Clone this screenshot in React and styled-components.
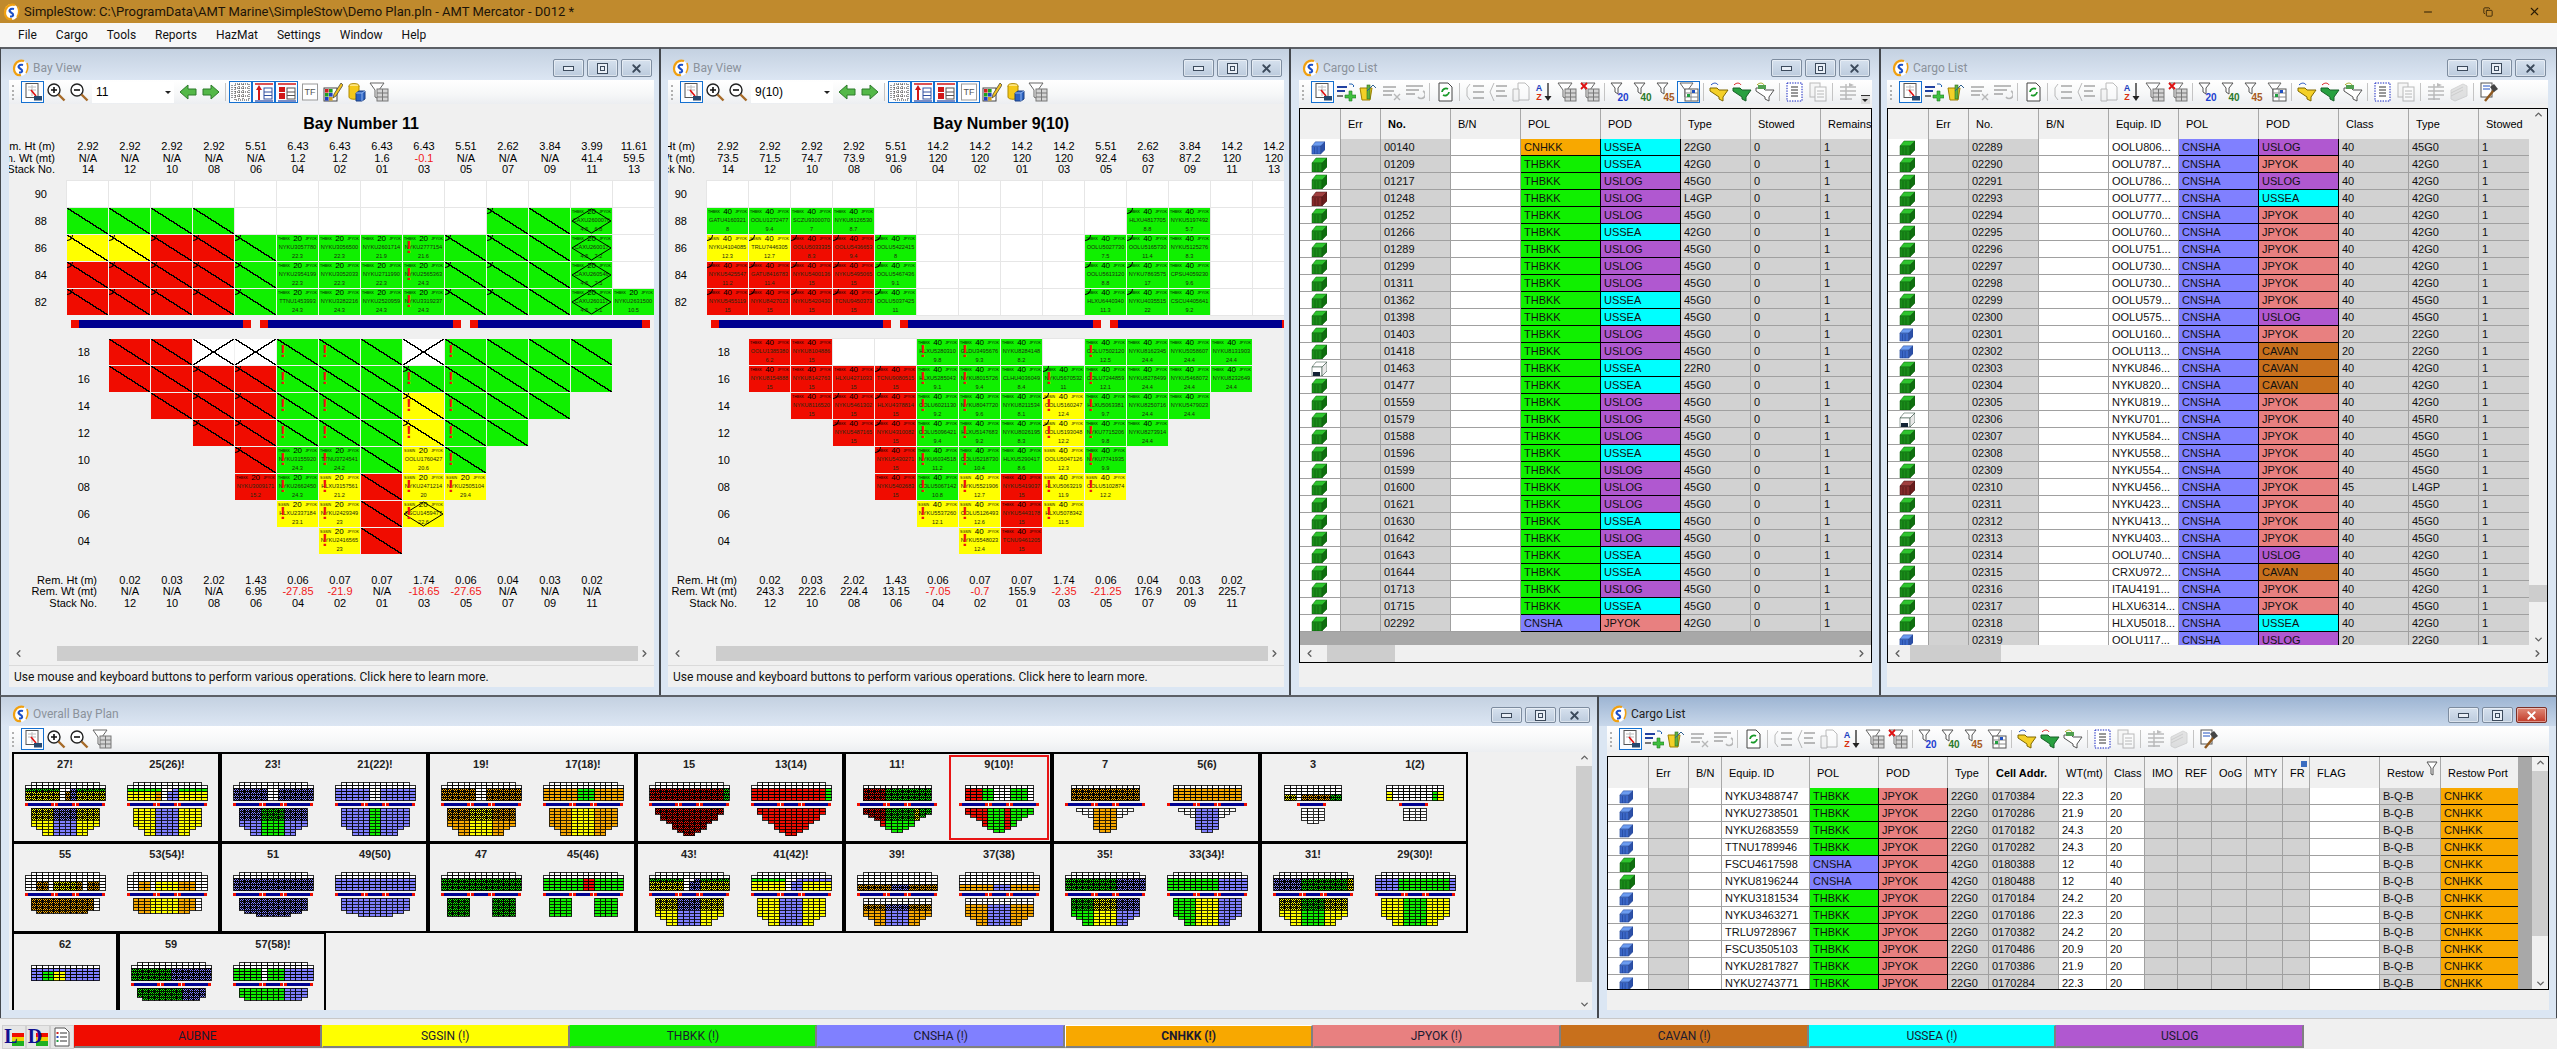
import React from "react";
import styled, { createGlobalStyle } from "styled-components";
import { ChevronDown, ChevronLeft, ChevronRight, ChevronUp, Copy, Minus, X } from "lucide-react";

const PORT = {
  AUBNE: "#f00c00",
  SGSIN: "#ffff00",
  THBKK: "#10f000",
  CNSHA: "#8080ff",
  CNHKK: "#f8a800",
  JPYOK: "#e88080",
  CAVAN: "#c8701c",
  USSEA: "#00ffff",
  USLOG: "#b058d0",
};
const CELL = { G: "#10f000", Y: "#ffff00", R: "#f00c00", W: "#ffffff", B: "#8080ff", O: "#f8a800" };

const GlobalStyle = createGlobalStyle`
  html, body { margin: 0; padding: 0; background: #f0f0f0; overflow: hidden; }
  body { font-family: "Liberation Sans", Arial, sans-serif; font-size: 11px; color: #000; }
  * { box-sizing: border-box; }
`;

/* ---------- shell ---------- */
const Page = styled.div`
  width: 2557px;
  height: 1049px;
  display: flex;
  flex-direction: column;
  overflow: hidden;
`;
const AppTitle = styled.div`
  height: 23px;
  background: #c08a2d;
  display: flex;
  align-items: center;
  padding-left: 3px;
  gap: 4px;
  font: 13px Roboto, sans-serif;
  color: #1c1408;
`;
const AppControls = styled.div`
  margin-left: auto;
  display: flex;
  color: #2a1c06;
`;
const AppControl = styled.div`
  width: 46px;
  height: 23px;
  display: flex;
  align-items: center;
  justify-content: center;
  margin-left: ${(p) => p.$ml || 0}px;
`;
const MenuBar = styled.div`
  height: 24px;
  background: #f7f7f7;
  display: flex;
  align-items: center;
  padding-left: 18px;
  gap: 19px;
  font: 12px Roboto, sans-serif;
  color: #111;
`;
const WindowRow = styled.div`
  display: flex;
  height: ${(p) => p.$h}px;
`;
const Win = styled.section`
  width: ${(p) => p.$w}px;
  height: 100%;
  display: flex;
  flex-direction: column;
  background: #dbe6f3;
  border-top: 2px solid #5c6066;
  border-left: 1px solid #44484e;
  border-right: 1px solid #44484e;
  padding: 0 ${(p) => p.$pr}px 8px ${(p) => p.$pl}px;
`;
const WinTitle = styled.header`
  height: ${(p) => p.$h}px;
  flex: none;
  margin: 0 -${(p) => p.$pr}px 0 -${(p) => p.$pl}px;
  padding: 0 ${(p) => p.$pr + 2}px 3px 11px;
  display: flex;
  align-items: flex-end;
  gap: 4px;
  background: linear-gradient(${(p) => (p.$active ? "#9db5d3, #c8d7ea" : "#c4d1e1, #dce6f3")});
  font: 12px Roboto, sans-serif;
  color: ${(p) => (p.$active ? "#222" : "#8b929b")};
`;
const WinName = styled.span`
  line-height: 18px;
`;
const WinButtons = styled.div`
  margin-left: auto;
  display: flex;
  gap: 3px;
`;
const WinButton = styled.div`
  width: 31px;
  height: ${(p) => p.$h}px;
  border: 1px solid ${(p) => (p.$close ? "#7c3028" : "#7d8c9f")};
  border-radius: 2px;
  background: ${(p) => (p.$close ? "linear-gradient(#e08a78, #c23a28)" : "linear-gradient(#d6e1ee, #bccbdd)")};
  display: flex;
  align-items: center;
  justify-content: center;
  box-shadow: inset 0 0 0 1px rgba(255, 255, 255, 0.45);
`;
const Client = styled.div`
  flex: 1;
  min-height: 0;
  background: #f0f0f0;
  display: flex;
  flex-direction: column;
  overflow: hidden;
`;

/* ---------- toolbar ---------- */
const Tools = styled.div`
  height: ${(p) => p.$h || 24}px;
  flex: none;
  display: flex;
  align-items: center;
  padding-left: 3px;
  background: linear-gradient(#ffffff, #f6f7f8 60%, #eceef1);
`;
const Grip = styled.div`
  width: 3px;
  height: 15px;
  margin-right: 6px;
  border-left: 2px dotted #b0b0b0;
`;
const Slot = styled.div`
  width: 23px;
  height: 22px;
  flex: none;
  display: flex;
  align-items: center;
  justify-content: center;
  border: 1px solid ${(p) => (p.$on ? "#1470d0" : "transparent")};
  background: ${(p) => (p.$on ? "#fafcff" : "transparent")};
  opacity: ${(p) => (p.$dim ? 0.38 : 1)};
`;
const ToolSep = styled.div`
  width: 1px;
  height: 18px;
  margin: 0 3px;
  flex: none;
  background: #c4c4c4;
`;
const Combo = styled.div`
  width: 82px;
  height: 21px;
  margin: 0 2px;
  background: #fff;
  font: 12px "Liberation Sans", sans-serif;
  display: flex;
  align-items: center;
  padding-left: 4px;
  position: relative;
  &::after {
    content: "";
    position: absolute;
    right: 3px;
    top: 9px;
    border: 3px solid transparent;
    border-top: 3px solid #222;
  }
`;
const Overflow = styled.div`
  margin-left: auto;
  margin-right: 2px;
  width: 9px;
  height: 9px;
  align-self: flex-end;
  border-top: 1px solid #333;
  position: relative;
  background: #ddd;
  &::after {
    content: "";
    position: absolute;
    left: 1px;
    top: 3px;
    border: 3px solid transparent;
    border-top: 3px solid #222;
  }
`;

const icons = {
  plan: (
    <>
      <rect x="3" y="1.5" width="12" height="14" fill="#fff" stroke="#555" />
      <path d="M5 5h8M5 8h8M9 3v11" stroke="#bbb" />
      <path d="M8 8l5 6" stroke="#e01010" strokeWidth="1.6" />
      <rect x="11" y="14" width="8" height="4.5" fill="#27486e" />
    </>
  ),
  zoomIn: (
    <>
      <circle cx="8" cy="8" r="6" fill="#fff" stroke="#222" strokeWidth="1.4" />
      <path d="M5 8h6M8 5v6" stroke="#111" strokeWidth="1.6" />
      <path d="M12.5 12.5l6 6" stroke="#a66a28" strokeWidth="2.4" />
    </>
  ),
  zoomOut: (
    <>
      <circle cx="8" cy="8" r="6" fill="#fff" stroke="#222" strokeWidth="1.4" />
      <path d="M5 8h6" stroke="#111" strokeWidth="1.6" />
      <path d="M12.5 12.5l6 6" stroke="#a66a28" strokeWidth="2.4" />
    </>
  ),
  left: <path d="M2 10l8-7v4h8v6h-8v4z" fill="#54b848" stroke="#2d7a2a" />,
  right: <path d="M18 10l-8-7v4H2v6h8v4z" fill="#54b848" stroke="#2d7a2a" />,
  grid: (
    <>
      <rect x="4" y="2" width="14" height="16" fill="#fff" stroke="#333" strokeDasharray="1 1" />
      <path d="M4 6h14M4 10h14M4 14h14M8 2v16M12 2v16" stroke="#333" strokeDasharray="1 1" />
      <path d="M1 3v14" stroke="#333" strokeDasharray="1 1" />
    </>
  ),
  height: (
    <>
      <path d="M1 2h18" stroke="#d01818" strokeWidth="1.5" />
      <path d="M5 3l-3 5h2v10h2V8h2z" fill="#d01818" />
      <rect x="10" y="6" width="8" height="11" fill="#fff" stroke="#3050a0" />
      <path d="M10 10h8M10 13.5h8" stroke="#3050a0" />
      <path d="M1 19h18" stroke="#2040a0" strokeWidth="1.2" />
    </>
  ),
  weight: (
    <>
      <path d="M1 2h18" stroke="#d01818" strokeWidth="1.5" />
      <rect x="2" y="5" width="6" height="5" fill="#d01818" />
      <rect x="2" y="11" width="6" height="6" fill="#d01818" />
      <rect x="10" y="6" width="8" height="11" fill="#fff" stroke="#555" />
      <path d="M10 10h8M10 13.5h8" stroke="#555" />
      <path d="M1 19h18" stroke="#2040a0" strokeWidth="1.2" />
    </>
  ),
  tf: (
    <>
      <rect x="2.5" y="2" width="15" height="16" fill="#fff" stroke="#999" />
      <text x="10" y="13" fontSize="9" textAnchor="middle" fontFamily="Liberation Sans" fill="#555">TF</text>
    </>
  ),
  chart: (
    <>
      <rect x="1" y="6" width="13" height="13" fill="#fff" stroke="#444" />
      <rect x="2" y="7" width="3.6" height="3.6" fill="#d02020" />
      <rect x="6" y="7" width="3.6" height="3.6" fill="#20a020" />
      <rect x="2" y="11" width="3.6" height="3.6" fill="#20a020" />
      <rect x="6" y="11" width="3.6" height="3.6" fill="#2040c0" />
      <rect x="2" y="15" width="3.6" height="3.6" fill="#2040c0" />
      <rect x="6" y="15" width="3.6" height="3.6" fill="#d0a020" />
      <path d="M18 1l-7 11-1 4 3-2 7-11z" fill="#f0c020" stroke="#333" strokeWidth=".7" />
    </>
  ),
  barrels: (
    <>
      <ellipse cx="8" cy="4" rx="5" ry="2.4" fill="#ffe680" stroke="#b08a00" />
      <path d="M3 4v11c0 3 10 3 10 0V4" fill="#f4c818" stroke="#b08a00" />
      <path d="M10 11l3-2h6v8l-3 2h-6z" fill="#2c62c0" stroke="#1c3f80" />
      <path d="M10 11h6v8M16 11l3-2" stroke="#8fb4f0" fill="none" />
    </>
  ),
  funnel: (
    <>
      <path d="M1 1h14l-5 7v9l-4-2V8z" fill="#fff" stroke="#666" />
      <rect x="8" y="7" width="11" height="12" fill="#d4d4d4" stroke="#777" />
      <path d="M8 11h11M8 15h11M13.5 7v12" stroke="#777" />
    </>
  ),
  funnelX: (
    <>
      <path d="M1 1h14l-5 7v9l-4-2V8z" fill="#fff" stroke="#666" />
      <rect x="8" y="7" width="11" height="12" fill="#d4d4d4" stroke="#777" />
      <path d="M8 11h11M8 15h11M13.5 7v12" stroke="#777" />
      <path d="M1 1l6 6M7 1L1 7" stroke="#e01010" strokeWidth="1.8" />
    </>
  ),
  add: (
    <>
      <path d="M1 5h10M1 9h8" stroke="#2040a0" strokeWidth="2" />
      <path d="M13 2a4 3 0 0 1 5 2l-1 1" stroke="#2060b0" fill="none" />
      <path d="M9 13h4V9h3v4h4v3h-4v3h-3v-3H9z" fill="#40c040" stroke="#207a20" strokeWidth=".6" />
      <path d="M1 14h6" stroke="#777" strokeWidth="2" />
    </>
  ),
  edit: (
    <>
      <path d="M1 6h12l-2 12H3z" fill="#f4d028" stroke="#a08000" />
      <rect x="8" y="3" width="3" height="14" fill="#60b040" stroke="#307020" strokeWidth=".6" />
      <path d="M8 9l6-6 3 3" stroke="#306090" fill="none" />
    </>
  ),
  rowsA: (
    <>
      <path d="M1 5h13M1 9h11M1 13h9" stroke="#555" strokeWidth="1.8" />
      <path d="M12 12l6 6M18 12l-6 6" stroke="#555" strokeWidth="1.4" />
    </>
  ),
  rowsB: (
    <>
      <path d="M1 4h17M1 8h13M1 12h9" stroke="#555" strokeWidth="1.8" />
      <path d="M18 9a4 4 0 1 1-5 6" stroke="#555" strokeWidth="1.6" fill="none" />
    </>
  ),
  refresh: (
    <>
      <path d="M4 1h9l4 4v14H4z" fill="#fff" stroke="#444" />
      <path d="M7 10a4 4 0 0 1 6-3M14 10a4 4 0 0 1-6 3" stroke="#1a9a2a" strokeWidth="1.8" fill="none" />
    </>
  ),
  treeA: (
    <>
      <path d="M5 2L2 6v8l3 4" stroke="#555" fill="none" />
      <path d="M8 4h11M8 10h11M8 16h11" stroke="#555" strokeWidth="1.8" />
    </>
  ),
  treeB: (
    <>
      <path d="M6 1l-4 9 4 9" stroke="#555" fill="none" />
      <path d="M8 4h11M8 9h9M8 14h11" stroke="#555" strokeWidth="1.8" />
    </>
  ),
  pages: (
    <>
      <path d="M7 1h7l4 4v13H7z" fill="#fff" stroke="#555" />
      <path d="M2 7h6v12H2z" fill="#eee" stroke="#555" />
    </>
  ),
  sort: (
    <>
      <text x="5" y="8.5" fontSize="9" fontWeight="700" textAnchor="middle" fontFamily="Liberation Sans" fill="#1c3fc0">A</text>
      <text x="5" y="18" fontSize="9" fontWeight="700" textAnchor="middle" fontFamily="Liberation Sans" fill="#d83010">Z</text>
      <path d="M14 1v15" stroke="#222" strokeWidth="1.3" />
      <path d="M10.5 14h7L14 19z" fill="#222" />
    </>
  ),
  layout: (
    <>
      <path d="M1 1h13l-5 7v9l-3-2V8z" fill="#fff" stroke="#666" />
      <rect x="6" y="7" width="13" height="12" fill="#fff" stroke="#555" />
      <path d="M6 11h13M6 15h13M12 7v12" stroke="#888" />
      <rect x="8" y="12" width="3" height="3" fill="#20a040" />
      <rect x="13" y="8" width="3" height="3" fill="#2050c0" />
    </>
  ),
  folderY: (
    <>
      <path d="M2 3c3-3 6-2 7 0" stroke="#2050c0" fill="none" />
      <path d="M1 6h7l2 2h9l-5 7v4l-4-2v-2L1 9z" fill="#f4d028" stroke="#806800" />
    </>
  ),
  folderG: (
    <>
      <path d="M2 3c3-3 6-2 7 0" stroke="#d82020" fill="none" />
      <path d="M1 6h7l2 2h9l-5 7v4l-4-2v-2L1 9z" fill="#28a040" stroke="#186028" />
    </>
  ),
  folderW: (
    <>
      <path d="M2 3c3-3 6-2 7 0" stroke="#a8a820" fill="none" />
      <path d="M1 6h7l2 2h9l-5 7v4l-4-2v-2L1 9z" fill="#fff" stroke="#555" />
      <rect x="3" y="3" width="8" height="4" fill="#50a050" />
    </>
  ),
  docDots: (
    <>
      <rect x="2" y="1" width="15" height="18" fill="#fff" stroke="#1020c0" strokeDasharray="1.4 1.2" />
      <path d="M6 5h7M6 8h7M6 11h7M6 14h7" stroke="#333" />
    </>
  ),
  copy: (
    <>
      <rect x="2" y="1" width="10" height="14" fill="#eee" stroke="#555" />
      <rect x="7" y="5" width="11" height="14" fill="#fff" stroke="#555" />
      <path d="M9 9h7M9 12h7M9 15h7" stroke="#555" />
    </>
  ),
  table: (
    <>
      <path d="M2 5h16M2 9h16M2 13h16M2 17h12M8 2v16" stroke="#555" strokeWidth="1.4" />
      <path d="M11 1l5 2-5 2z" fill="#555" />
    </>
  ),
  layers: (
    <>
      <path d="M2 8l12-6 4 2v10L6 19l-4-2z" fill="#bbb" stroke="#999" />
      <path d="M2 11l12-6M2 14l12-6" stroke="#888" />
    </>
  ),
  hammer: (
    <>
      <rect x="2" y="1" width="11" height="14" fill="#fff" stroke="#555" />
      <path d="M4 4h7M4 7h7" stroke="#2050c0" />
      <path d="M6 19L15 8" stroke="#905a20" strokeWidth="2.4" />
      <path d="M11 5l4-3 4 5-4 3z" fill="#444" />
    </>
  ),
};

const Icon = ({ name, size = 20 }) => (
  <svg width={size} height={size} viewBox="0 0 20 20">
    {icons[name]}
  </svg>
);

const FilterSize = ({ size }) => {
  const tone = { 20: "#1c40d0", 40: "#2a7a2a", 45: "#a85a20" }[size];
  return (
    <svg width="20" height="20" viewBox="0 0 20 20">
      <path d="M1 1h11l-4 5v6l-3-2V6z" fill="#fff" stroke="#555" />
      <text x="13" y="19" fontSize="10" fontWeight="700" textAnchor="middle" fontFamily="Liberation Sans" fill={tone}>
        {size}
      </text>
    </svg>
  );
};

const Toolbar = ({ items, h, overflow }) => (
  <Tools $h={h}>
    <Grip />
    {items.map((item, i) => {
      if (item === "|") return <ToolSep key={i} />;
      if (typeof item !== "string") return <React.Fragment key={i}>{item}</React.Fragment>;
      const [name, flag] = item.split(":");
      return (
        <Slot key={i} $on={flag === "on"} $dim={flag === "dim"}>
          {/^\d+$/.test(name) ? <FilterSize size={name} /> : <Icon name={name} />}
        </Slot>
      );
    })}
    {overflow && <Overflow />}
  </Tools>
);

const bayTools = (value) => [
  "plan:on",
  "zoomIn",
  "zoomOut",
  <Combo>{value}</Combo>,
  "left",
  "right",
  "|",
  "grid:on",
  "height:on",
  "weight:on",
  value === "11" ? "tf" : "tf:on",
  "chart",
  "barrels",
  "funnel",
];
const cargoTools = [
  "plan:on", "add", "edit", "rowsA:dim", "rowsB:dim", "|", "refresh", "|", "treeA:dim", "treeB:dim", "pages:dim",
  "sort", "funnel", "funnelX", "|", "20", "40", "45",
];
const cargoToolsEnd = ["|", "folderY", "folderG", "folderW", "|", "docDots", "copy:dim", "|", "table:dim"];

const Logo = () => (
  <svg width="17" height="18" viewBox="0 0 17 18">
    <ellipse cx="8.5" cy="9" rx="7" ry="8" fill="#fff" />
    <path d="M12 2C6 0 2 5 2 10c0 4 3 7 7 6" fill="none" stroke="#f0a010" strokeWidth="2.2" />
    <path d="M11 6C7 5 5 8 8 9.5s3 4-1 4" fill="none" stroke="#1c50c8" strokeWidth="2.2" />
    <path d="M15 4c1 3 1 7-1 10" fill="none" stroke="#f0a010" strokeWidth="1.6" />
  </svg>
);

const WindowShell = ({ title, w, pl, pr, titleH = 31, btnH = 18, active, children }) => (
  <Win $w={w} $pl={pl} $pr={pr}>
    <WinTitle $h={titleH} $pl={pl} $pr={pr} $active={active}>
      <Logo />
      <WinName>{title}</WinName>
      <WinButtons>
        <WinButton $h={btnH}>
          <svg width="11" height="7"><rect x=".5" y="1.5" width="10" height="4" fill="#e8eef6" stroke="#3c4a5c" /></svg>
        </WinButton>
        <WinButton $h={btnH}>
          <svg width="11" height="11"><rect x=".5" y=".5" width="10" height="10" fill="#e8eef6" stroke="#3c4a5c" /><rect x="3.5" y="3.5" width="4" height="4" fill="none" stroke="#3c4a5c" /></svg>
        </WinButton>
        <WinButton $h={btnH} $close={active}>
          <X size={13} strokeWidth={3.4} color={active ? "#fff" : "#3c4a5c"} />
        </WinButton>
      </WinButtons>
    </WinTitle>
    <Client>{children}</Client>
  </Win>
);

/* ---------- bay view ---------- */
const PlanTitle = styled.div`
  height: 37px;
  line-height: 40px;
  flex: none;
  width: ${(p) => p.$label + 588}px;
  padding-left: ${(p) => p.$label}px;
  text-align: center;
  font-size: 16px;
  font-weight: 700;
`;
const MetaGrid = styled.div`
  flex: none;
  display: grid;
  grid-template-columns: ${(p) => p.$label}px repeat(14, 42px);
  grid-auto-rows: 11.5px;
  line-height: 11.5px;
  margin-top: ${(p) => p.$mt || 0}px;
  text-align: center;
`;
const MetaLabel = styled.div`
  display: flex;
  justify-content: flex-end;
  white-space: nowrap;
  padding-right: 12px;
`;
const MetaValue = styled.div`
  color: ${(p) => (p.$neg ? "#f01818" : "#000")};
`;
const PlanGrid = styled.div`
  flex: none;
  display: grid;
  grid-template-columns: ${(p) => p.$label - 1}px repeat(14, 41px);
  grid-auto-rows: 26px;
  gap: 1px;
  margin-top: ${(p) => p.$mt}px;
`;
const RowLabel = styled.div`
  display: flex;
  align-items: center;
  justify-content: flex-end;
  padding-right: ${(p) => p.$pr}px;
  font-size: 11px;
`;
const BayCell = styled.div`
  position: relative;
  overflow: hidden;
  background-color: ${(p) => p.$color};
  display: flex;
  flex-direction: column;
  outline: ${(p) => (p.$empty ? "1px solid #e6e6e6" : "none")};
  background-image: ${(p) => {
    const a = "linear-gradient(to top right, transparent calc(50% - .7px), #000 calc(50% - .7px), #000 calc(50% + .7px), transparent calc(50% + .7px))";
    const b = "linear-gradient(to top left, transparent calc(50% - .7px), #000 calc(50% - .7px), #000 calc(50% + .7px), transparent calc(50% + .7px))";
    if (p.$cross) return `${a}, ${b}`;
    return p.$diag ? a : "none";
  }};
`;
const Arc = styled.i`
  position: absolute;
  left: 0;
  top: 0;
  width: 6px;
  height: 6px;
  border-right: 1px solid #000;
  border-bottom: 1px solid #000;
  border-bottom-right-radius: 6px;
`;
const Alert = styled.b`
  position: absolute;
  left: 3px;
  top: 3px;
  font-size: 17px;
  line-height: 19px;
  color: #f01010;
`;
const CellTop = styled.div`
  height: 8px;
  display: flex;
  align-items: center;
  justify-content: space-between;
  padding: 0 1px;
  font-size: 3.6px;
  line-height: 8px;
`;
const CellSize = styled.span`
  font-size: 8px;
`;
const CellLine = styled.div`
  height: 9px;
  line-height: 9px;
  text-align: center;
  font-size: 5.6px;
  white-space: pre;
  color: #1c2a10;
`;
const Diamond = styled.svg`
  position: absolute;
  inset: 0;
  width: 100%;
  height: 100%;
`;
const Hatches = styled.div`
  flex: none;
  display: flex;
  gap: 9px;
  margin: 5px 0 0 ${(p) => p.$label + 4}px;
`;
const HatchBar = styled.div`
  height: 8px;
  flex: none;
  width: ${(p) => p.$w}px;
  background: #000090;
  border-left: 8px solid #f00c00;
  border-right: 8px solid #f00c00;
`;
const HScroll = styled.div`
  height: ${(p) => p.$h || 15}px;
  flex: none;
  display: flex;
  align-items: center;
  justify-content: space-between;
  background: #f0f0f0;
  margin-top: ${(p) => (p.$auto ? "auto" : "0")};
  padding: 0 4px;
`;
const Thumb = styled.div`
  height: 100%;
  background: #cdcdcd;
  width: ${(p) => p.$w}px;
  margin-left: ${(p) => p.$ml}px;
  margin-right: auto;
`;
const StatusBar = styled.div`
  height: 22px;
  flex: none;
  margin-top: 4px;
  border-top: 1px solid #dadada;
  padding: 0 5px;
  display: flex;
  align-items: center;
  font: 12px Roboto, sans-serif;
  color: #111;
`;

const parseCell = (token) => {
  const [code, id, wt] = token.split(" ");
  const flags = code.slice(1);
  return {
    kind: code[0],
    diag: flags.includes("x"),
    arc: flags.includes("a"),
    alert: flags.includes("!"),
    diamond: flags.includes("d"),
    cross: flags.includes("X"),
    id,
    wt: wt && wt.replace("_", "    "),
  };
};

const Cell = ({ token, size }) => {
  const c = parseCell(token);
  if (c.kind === "-") return <div />;
  if (c.kind === ".") return <BayCell $color="#fff" $empty />;
  return (
    <BayCell $color={CELL[c.kind]} $diag={c.diag} $cross={c.cross}>
      {c.id && (
        <>
          <CellTop>
            <span>{c.kind === "Y" ? "SGSIN" : "THBKK"}</span>
            <CellSize>{size}</CellSize>
            <span>JPYOK</span>
          </CellTop>
          <CellLine>{c.id}</CellLine>
          <CellLine>{c.wt}</CellLine>
        </>
      )}
      {c.diamond && (
        <Diamond viewBox="0 0 41 26" preserveAspectRatio="none">
          <polygon points="20.5,1 40,13 20.5,25 1,13" fill="none" stroke="#000" strokeWidth="1" />
        </Diamond>
      )}
      {c.arc && <Arc />}
      {c.alert && <Alert>!</Alert>}
    </BayCell>
  );
};

const BayPlan = ({ plan }) => {
  const { label, size } = plan;
  return (
    <Client>
      <Toolbar items={bayTools(plan.value)} />
      <PlanTitle $label={label}>Bay Number {plan.value}</PlanTitle>
      <MetaGrid $label={label}>
        {[["Rem. Ht (m)", plan.ht], ["Rem. Wt (mt)", plan.wt], ["Stack No.", plan.stack]].map(([name, values]) => (
          <React.Fragment key={name}>
            <MetaLabel>{name}</MetaLabel>
            {values.split(" ").map((v, i) => (
              <MetaValue key={i} $neg={v.startsWith("-")}>{v}</MetaValue>
            ))}
          </React.Fragment>
        ))}
      </MetaGrid>
      <PlanGrid $label={label} $mt={5}>
        {plan.deck.map((row) => (
          <React.Fragment key={row[0]}>
            <RowLabel $pr={19}>{row[0]}</RowLabel>
            {row[1].split(",").map((t, i) => <Cell key={i} token={t} size={size} />)}
          </React.Fragment>
        ))}
      </PlanGrid>
      <Hatches $label={label}>
        <HatchBar $w={180} />
        <HatchBar $w={201} />
        <HatchBar $w={180} />
      </Hatches>
      <PlanGrid $label={label} $mt={11}>
        {plan.hold.map((row) => (
          <React.Fragment key={row[0]}>
            <div />
            <RowLabel $pr={18}>{row[0]}</RowLabel>
            {row[1].split(",").map((t, i) => <Cell key={i} token={t} size={size} />)}
          </React.Fragment>
        ))}
      </PlanGrid>
      <MetaGrid $label={label} $mt={21}>
        {[["Rem. Ht (m)", plan.remHt], ["Rem. Wt (mt)", plan.remWt], ["Stack No.", "12 10 08 06 04 02 01 03 05 07 09 11"]].map(([name, values]) => (
          <React.Fragment key={name}>
            <div />
            <MetaLabel>{name}</MetaLabel>
            {values.split(" ").map((v, i) => (
              <MetaValue key={i} $neg={v.startsWith("-")}>{v}</MetaValue>
            ))}
            <div />
          </React.Fragment>
        ))}
      </MetaGrid>
      <HScroll $auto>
        <ChevronLeft size={11} strokeWidth={3} color="#606060" />
        <Thumb $w={plan.thumb} $ml={33} />
        <ChevronRight size={11} strokeWidth={3} color="#606060" />
      </HScroll>
      <StatusBar>Use mouse and keyboard buttons to perform various operations. Click here to learn more.</StatusBar>
    </Client>
  );
};

const bay11 = {
  value: "11",
  size: 20,
  label: 58,
  thumb: 581,
  ht: "2.92 2.92 2.92 2.92 5.51 6.43 6.43 6.43 6.43 5.51 2.62 3.84 3.99 11.61",
  wt: "N/A N/A N/A N/A N/A 1.2 1.2 1.6 -0.1 N/A N/A N/A 41.4 59.5",
  stack: "14 12 10 08 06 04 02 01 03 05 07 09 11 13",
  deck: [
    ["90", ".,.,.,.,.,.,.,.,.,.,.,.,.,."],
    ["88", "Gx,Gx,Gx,Gx,.,.,.,.,.,.,Gxa,Gx,Gd CAXU2600076 4.5_6.8,."],
    ["86", "Yxa,Yxa,Rxa,Rxa,Gxa,G NYKU3057780 22.3,G NYKU3056500 22.3,G NYKU2601714 21.9,G! NYKU2777154 21.6,Gxa,Gxa,Gx,Gd CAXU260017 4.5_7.2,."],
    ["84", "Rxa,Rxa,Rxa,Rxa,Gxa,G NYKU2954199 22.3,G NYKU3052033 22.3,G NYKU2711990 22.3,G! NYKU2565363 24.3,Gxa,Gxa,Gx,Gd CAXU260546 4.5_7.5,."],
    ["82", "Rxa,Rxa,Rxa,Rxa,Gxa,G TTNU1453993 24.3,G NYKU3282216 24.3,G NYKU2520959 24.3,G! NYKU3319237 24.3,Gxa,Gxa,Gx,Gd CAXU260117 4.5_7.1,G NYKU2631500 10.5"],
  ],
  hold: [
    ["18", "Rx,Rx,WX,WX,Gx!,Gx!,Gx,WX,Gx!,Gx,Gx,Gx,-"],
    ["16", "Rx,Rx,Rxa,Rxa,Gx!,Gx!,Gx,Gxa!,Gx!,Gx,Gx,Gx,-"],
    ["14", "-,Rx,Rxa,Rxa,Gx!,Gx!,Gx,Yxa!,Gx!,Gx,Gx,-,-"],
    ["12", "-,-,Rxa,Rxa,Gx!,Gx!,Gx,Yxa!,Gx!,Gx,-,-,-"],
    ["10", "-,-,-,Rxa,G! NYKU3155920 24.3,G! TTNU3724541 24.2,Gx,Y OOLU1760427 20.6,Gx!,-,-,-,-"],
    ["08", "-,-,-,R NYKU3009171 15.2,G! NYKU2662450 24.3,Y! HLXU3157561 21.2,Rx,Y! NYKU2471214 20,Y! NYKU2505104 29.4,-,-,-,-"],
    ["06", "-,-,-,-,Y! HLXU2337184 23.1,Y! NYKU2429349 23,Rx,Yd! FSCU1459477 22.6,-,-,-,-,-"],
    ["04", "-,-,-,-,-,Y! NYKU2416565 23,Rx,-,-,-,-,-,-"],
  ],
  remHt: "0.02 0.03 2.02 1.43 0.06 0.07 0.07 1.74 0.06 0.04 0.03 0.02",
  remWt: "N/A N/A N/A 6.95 -27.85 -21.9 N/A -18.65 -27.65 N/A N/A N/A",
};
const bay9 = {
  value: "9(10)",
  size: 40,
  label: 39,
  thumb: 552,
  ht: "2.92 2.92 2.92 2.92 5.51 14.2 14.2 14.2 14.2 5.51 2.62 3.84 14.2 14.2",
  wt: "73.5 71.5 74.7 73.9 91.9 120 120 120 120 92.4 63 87.2 120 120",
  stack: "14 12 10 08 06 04 02 01 03 05 07 09 11 13",
  deck: [
    ["90", ".,.,.,.,.,.,.,.,.,.,.,.,.,."],
    ["88", "G GATU4160321 8,G OOLU1272477 9.4,G SCZU9300070 7,G NYKU8126530 8.7,.,.,.,.,.,.,Ga HLXU4817705 8.8,G NYKU5197492 5.7,.,."],
    ["86", "Ya NYKU4104085 12.3,Ya TRLU7446305 12.7,Ra OOLU5033335 8.3,Ra OOLU5436653 9.4,Ga OOLU5422415 8,.,.,.,.,Ga OOLU5027730 7.5,Ga OOLU5165730 11.4,G NYKU5125276 8.3,.,."],
    ["84", "Ra NYKU5425547 11.2,Ra GATU8416783 11.4,Ra NYKU5400136 15,Ra NYKU5495065 15,Ga OOLU5467436 9.1,.,.,.,.,Ga OOLU5613120 8.8,Ga NYKU7863575 17,G CPSU4059230 9.6,.,."],
    ["82", "Ra NYKU5455119 15,Ra NYKU8427023 15,Ra NYKU5420430 15,Ra TCNU9450373 15,Ga OOLU5037425 11,.,.,.,.,Ga HLXU6440340 11.3,Ga NYKU4035515 22,G CSCU4405641 9.2,.,."],
  ],
  hold: [
    ["18", "R OOLU1385380 6.2,R NYKU8104886 15,.,.,G! HLXU5280310 9.8,G! GLDU3495676 9.3,G NYKU8284148 8.2,.,G! OOLU7502120 12.5,G NYKU8162345 24.4,G NYKU5058607 24.4,G NYKU8131903 24.4,-"],
    ["16", "R NYKU8154888 15,R NYKU8142763 15,R HLXU4271033 15,Ra TCNU9080515 15,G! HLXU5285043 9.1,G! NYKU8015726 9.4,G CLHU4036049 8.4,Ga! NYKU5670532 11,G! OOLU7244859 12.1,G NYKU8278499 24.4,G NYKU5468072 24.4,G NYKU8232649 24.4,-"],
    ["14", "-,R NYKU8116520 15,Ra NYKU5461302 15,Ra HLXU4378814 15,G! OOLU6021130 9.2,G! NYKU8047720 9.6,G NYKU8211534 8.1,Ya! OOLU5160247 12.4,G! HLXU5063381 9.7,G NYKU8250716 24.4,G NYKU5479023 24.4,-,-"],
    ["12", "-,-,Ra NYKU5487165 15,Ra NYKU4310082 15,G! OOLU5096421 9.4,G! HLXU5147683 9.2,G NYKU8026195 8.3,Ya! OOLU5193048 12.2,G! NYKU7715206 9.8,G NYKU8273914 24.4,-,-,-"],
    ["10", "-,-,-,Ra NYKU5430271 15,G! NYKU6034518 11.2,G! OOLU5218730 10.4,G HLXU5290417 8.6,Y OOLU5047126 12.3,G! NYKU7741935 9.9,-,-,-,-"],
    ["08", "-,-,-,R NYKU5402683 15,G! OOLU5067142 10.8,Y! NYKU5521906 12.7,R NYKU5419037 15,Y! HLXU5063219 11.9,Y! OOLU5102874 12.2,-,-,-,-"],
    ["06", "-,-,-,-,Y! NYKU5537260 12.1,Y! OOLU5126493 12.6,R NYKU5443178 15,Y! HLXU5078342 11.5,-,-,-,-,-"],
    ["04", "-,-,-,-,-,Y! NYKU5548023 12.4,R TCNU9461205 15,-,-,-,-,-,-"],
  ],
  remHt: "0.02 0.03 2.02 1.43 0.06 0.07 0.07 1.74 0.06 0.04 0.03 0.02",
  remWt: "243.3 222.6 224.4 13.15 -7.05 -0.7 155.9 -2.35 -21.25 176.9 201.3 225.7",
};

/* ---------- cargo tables ---------- */
const TableFrame = styled.div`
  flex: none;
  height: ${(p) => p.$h}px;
  margin-top: 4px;
  border: 1px solid #000;
  background: #a8a8a8;
  display: flex;
  flex-direction: column;
  overflow: hidden;
`;
const TableMain = styled.div`
  flex: 1;
  min-height: 0;
  display: flex;
  overflow: hidden;
`;
const TableBody = styled.div`
  flex: 1;
  min-width: 0;
  overflow: hidden;
`;
const Row = styled.div`
  display: grid;
  grid-template-columns: ${(p) => p.$cols};
  height: ${(p) => p.$h || 17}px;
`;
const HeadCell = styled.div`
  background: #f0f0f0;
  border-right: 1px solid #a8a8a8;
  display: flex;
  align-items: center;
  padding-left: 7px;
  font-weight: ${(p) => (p.$bold ? 700 : 400)};
  white-space: nowrap;
  overflow: hidden;
  position: relative;
`;
const DataCell = styled.div`
  background: ${(p) => p.$bg};
  border-right: 1px solid ${(p) => (p.$port ? "#000" : "#a0a0a0")};
  border-bottom: 1px solid ${(p) => (p.$port ? "#000" : "#a0a0a0")};
  display: flex;
  align-items: center;
  padding-left: 3px;
  white-space: nowrap;
  overflow: hidden;
  color: #111;
`;
const IconCell = styled(DataCell)`
  padding-left: 11px;
`;
const Band = styled.div`
  width: ${(p) => p.$w}px;
  flex: none;
  background: #a8a8a8;
`;
const VScroll = styled.div`
  width: ${(p) => p.$w}px;
  flex: none;
  background: #f0f0f0;
  display: flex;
  flex-direction: column;
  align-items: center;
  justify-content: space-between;
`;
const VThumb = styled.div`
  width: 100%;
  height: ${(p) => p.$h}px;
  margin-top: ${(p) => p.$mt}px;
  margin-bottom: auto;
  background: #cdcdcd;
`;
const HeadMark = styled.span`
  position: absolute;
  right: 2px;
  top: 4px;
  display: flex;
`;

const Cube = ({ kind }) => {
  const sets = {
    g: { w: 16, top: "#2ec42e", front: "#1a8c1a", side: "#0f6e0f", line: "#0c5c0c" },
    b: { w: 14, top: "#6c9cf0", front: "#3c68c8", side: "#2c50a8", line: "#183a88" },
    r: { w: 16, top: "#a04040", front: "#862c2c", side: "#6a1c1c", line: "#401010" },
    w: { w: 16, top: "#fff", front: "#fff", side: "#e8e8e8", line: "#1c3c2c" },
  };
  const s = sets[kind];
  return (
    <svg width={s.w} height="15" viewBox="0 0 16 15">
      <polygon points="1,6 5,1 16,1 11,6" fill={s.top} stroke={s.line} strokeWidth=".5" />
      <polygon points="1,6 11,6 11,15 1,15" fill={s.front} stroke={s.line} strokeWidth=".5" />
      <polygon points="11,6 16,1 16,10 11,15" fill={s.side} stroke={s.line} strokeWidth=".5" />
      {kind === "w" ? (
        <rect x="2" y="11" width="7" height="4" fill="#123" />
      ) : (
        <path d="M4 7v8M7 7v8" stroke={s.line} strokeWidth=".6" />
      )}
    </svg>
  );
};

const CargoTable = ({ h, cols, rows, headBold, marks = {}, bandW, scroll, hscroll }) => {
  const template = cols.map((c) => `${c.w}px`).join(" ");
  return (
    <TableFrame $h={h}>
      <TableMain>
        <TableBody>
          <Row $cols={template} $h={cols.headH || 30}>
            {cols.map((c, i) => (
              <HeadCell key={i} $bold={c.h === headBold}>
                {c.h}
                {marks[c.h] && <HeadMark>{marks[c.h]}</HeadMark>}
              </HeadCell>
            ))}
          </Row>
          {rows.map((row, r) => (
            <Row key={r} $cols={template}>
              {cols.map((c, i) => {
                const v = c.k === undefined ? "" : row[c.k];
                if (c.cube) {
                  return (
                    <IconCell key={i} $bg="#fff">
                      <Cube kind={v} />
                    </IconCell>
                  );
                }
                if (c.port) return <DataCell key={i} $bg={PORT[v]} $port>{v}</DataCell>;
                return (
                  <DataCell key={i} $bg={c.white ? "#fff" : "#d2d2d2"}>
                    {c.fixed || v}
                  </DataCell>
                );
              })}
            </Row>
          ))}
        </TableBody>
        {bandW && <Band $w={bandW} />}
        {scroll && (
          <VScroll $w={scroll.w}>
            <ChevronUp size={11} strokeWidth={3} color="#606060" />
            <VThumb $h={scroll.h} $mt={scroll.mt} />
            <ChevronDown size={11} strokeWidth={3} color="#606060" />
          </VScroll>
        )}
      </TableMain>
      {hscroll && (
        <HScroll $h={17}>
          <ChevronLeft size={11} strokeWidth={3} color="#606060" />
          <Thumb $w={hscroll.w} $ml={hscroll.ml} />
          <ChevronRight size={11} strokeWidth={3} color="#606060" />
        </HScroll>
      )}
    </TableFrame>
  );
};

const parseRows = (text) => text.trim().split(/\s*\|\s*/).map((r) => r.split(" "));

const rowsA = parseRows(`00140 b CNHKK USSEA 22G0|01209 g THBKK USSEA 42G0|01217 g THBKK USLOG 45G0|01248 r THBKK USLOG L4GP|01252 g THBKK USLOG 45G0|01266 g THBKK USSEA 42G0|01289 g THBKK USLOG 45G0|01299 g THBKK USLOG 45G0|01311 g THBKK USLOG 45G0|01362 g THBKK USSEA 45G0|01398 g THBKK USSEA 45G0|01403 g THBKK USLOG 45G0|01418 g THBKK USLOG 45G0|01463 w THBKK USSEA 22R0|01477 g THBKK USSEA 45G0|01559 g THBKK USLOG 45G0|01579 g THBKK USLOG 45G0|01588 g THBKK USLOG 45G0|01596 g THBKK USSEA 45G0|01599 g THBKK USLOG 45G0|01600 g THBKK USLOG 45G0|01621 g THBKK USLOG 45G0|01630 g THBKK USSEA 45G0|01642 g THBKK USLOG 45G0|01643 g THBKK USSEA 45G0|01644 g THBKK USSEA 45G0|01713 g THBKK USLOG 45G0|01715 g THBKK USSEA 45G0|02292 g CNSHA JPYOK 42G0`);
const colsA = [
  { h: "", w: 41, k: 1, cube: true },
  { h: "Err", w: 40 },
  { h: "No.", w: 70, k: 0 },
  { h: "B/N", w: 70, white: true },
  { h: "POL", w: 80, k: 2, port: true },
  { h: "POD", w: 80, k: 3, port: true },
  { h: "Type", w: 70, k: 4 },
  { h: "Stowed", w: 70, fixed: "0" },
  { h: "Remains", w: 60, fixed: "1" },
];

const rowsB = parseRows(`02289 g OOLU806... USLOG 40 45G0|02290 g OOLU787... JPYOK 40 42G0|02291 g OOLU786... USLOG 40 42G0|02293 g OOLU777... USSEA 40 42G0|02294 g OOLU770... JPYOK 40 42G0|02295 g OOLU760... JPYOK 40 42G0|02296 g OOLU751... JPYOK 40 42G0|02297 g OOLU730... JPYOK 40 42G0|02298 g OOLU730... JPYOK 40 42G0|02299 g OOLU579... JPYOK 40 45G0|02300 g OOLU575... USLOG 40 45G0|02301 b OOLU160... JPYOK 20 22G0|02302 b OOLU113... CAVAN 20 22G0|02303 g NYKU846... CAVAN 40 42G0|02304 g NYKU820... CAVAN 40 42G0|02305 g NYKU819... JPYOK 40 42G0|02306 w NYKU701... JPYOK 40 45R0|02307 g NYKU584... JPYOK 40 45G0|02308 g NYKU558... JPYOK 40 45G0|02309 g NYKU554... JPYOK 40 45G0|02310 r NYKU456... JPYOK 45 L4GP|02311 g NYKU423... JPYOK 40 45G0|02312 g NYKU413... JPYOK 40 45G0|02313 g NYKU403... JPYOK 40 45G0|02314 g OOLU740... USLOG 40 42G0|02315 g CRXU972... CAVAN 40 45G0|02316 g ITAU4191... JPYOK 40 42G0|02317 g HLXU6314... JPYOK 40 45G0|02318 g HLXU5018... USSEA 40 42G0|02319 b OOLU117... USLOG 20 22G0`).map((r) => [r[0], r[1], r[2], "CNSHA", r[3], r[4], r[5]]);
const colsB = [
  { h: "", w: 41, k: 1, cube: true },
  { h: "Err", w: 40 },
  { h: "No.", w: 70, k: 0 },
  { h: "B/N", w: 70, white: true },
  { h: "Equip. ID", w: 70, k: 2, white: true },
  { h: "POL", w: 80, k: 3, port: true },
  { h: "POD", w: 80, k: 4, port: true },
  { h: "Class", w: 70, k: 5 },
  { h: "Type", w: 70, k: 6 },
  { h: "Stowed", w: 52, fixed: "1" },
];

const rowsC = parseRows(`b NYKU3488747 THBKK 22G0 0170384 22.3 20|b NYKU2738501 THBKK 22G0 0170286 21.9 20|b NYKU2683559 THBKK 22G0 0170182 24.3 20|b TTNU1789946 THBKK 22G0 0170282 24.3 20|g FSCU4617598 CNSHA 42G0 0180388 12 40|g NYKU8196244 CNSHA 42G0 0180488 12 40|b NYKU3181534 THBKK 22G0 0170184 24.2 20|b NYKU3463271 THBKK 22G0 0170186 22.3 20|b TRLU9728967 THBKK 22G0 0170382 24.2 20|b FSCU3505103 THBKK 22G0 0170486 20.9 20|b NYKU2817827 THBKK 22G0 0170386 21.9 20|b NYKU2743771 THBKK 22G0 0170284 22.3 20`);
const colsC = [
  { h: "", w: 41, k: 0, cube: true },
  { h: "Err", w: 40 },
  { h: "B/N", w: 33, white: true },
  { h: "Equip. ID", w: 88, k: 1, white: true },
  { h: "POL", w: 69, k: 2, port: true },
  { h: "POD", w: 69, k: "pod", port: true },
  { h: "Type", w: 41, k: 3 },
  { h: "Cell Addr.", w: 70, k: 4 },
  { h: "WT(mt)", w: 48, k: 5, white: true },
  { h: "Class", w: 38, k: 6, white: true },
  { h: "IMO", w: 33 },
  { h: "REF", w: 34 },
  { h: "OoG", w: 35 },
  { h: "MTY", w: 36 },
  { h: "FR", w: 27 },
  { h: "FLAG", w: 70, white: true },
  { h: "Restow", w: 61, k: "area" },
  { h: "Restow Port", w: 80, k: "rp", port: true },
];
colsC.headH = 31;
rowsC.forEach((r) => {
  r.pod = "JPYOK";
  r.area = "B-Q-B";
  r.rp = "CNHKK";
});

/* ---------- overall bay plan ---------- */
const PlanBody = styled.div`
  flex: 1;
  min-height: 0;
  display: flex;
`;
const CardArea = styled.div`
  flex: 1;
  min-width: 0;
  overflow: hidden;
  padding: 1px 0 0 4px;
  display: flex;
  flex-direction: column;
  gap: 1px;
`;
const CardRow = styled.div`
  display: flex;
  flex: none;
  gap: 2px;
`;
const Card = styled.div`
  height: 89px;
  flex: none;
  display: flex;
  border: 1px solid #000;
  outline: 0.4px solid #000;
`;
const Half = styled.div`
  width: 102px;
  display: flex;
  flex-direction: column;
  align-items: center;
  outline: ${(p) => (p.$selected ? "2px solid #e81414" : "none")};
  outline-offset: -3px;
`;
const HalfName = styled.div`
  height: 21px;
  line-height: 21px;
  font-size: 11px;
  font-weight: 700;
  color: #222;
`;
const MiniSvg = styled.svg`
  display: block;
  margin-top: 7px;
`;

const CW = 5.68;
const CH = 3.06;
const UPF = [[1, 12], [0, 13], [0, 13], [0, 13], [0, 13], [0, 13]];
const UPN = [null, [1, 12], [1, 12], [1, 12], [1, 12], [1, 12]];
const UPS = [null, [2, 11], [2, 11], [2, 11], [2, 11], [2, 11]];
const full = (n) => Array.from({ length: n }, () => [1, 12]);
const U = [...full(6), [2, 11], [3, 10], [3, 10]];
const V8 = [[1, 12], [1, 12], [2, 11], [3, 10], [4, 9], [4, 9], [5, 8], [6, 7]];
const V9 = [[1, 12], [1, 12], [2, 11], [2, 11], [3, 10], [4, 9], [4, 9], [5, 8], [6, 7]];
const V7 = [[2, 11], [3, 10], [4, 9], [5, 8], [5, 8], [5, 8], [5, 8], [6, 7]];
const SM = [[5, 8], [5, 8], [5, 8], [5, 8], [6, 7]];
const S5 = [...full(4), [2, 10]];
const S6 = [...full(4), [2, 11], [4, 9]];
const S6F = full(6);
const S4 = [...full(3), [2, 11]];

const mkBay = (name, up, low, lowShape, opts = {}) => ({ name, up, low, lowShape, ...opts });

const bayRows = [
  [
    [mkBay("27!", "YYYYYY.OBYYYYY", ".YYYYBBBBYYYY.", U, { top: "GGGGGG..BGGGGG", hatch: "half" }), mkBay("25(26)!", "YYYYYO.BBYYYYY", ".YYYYBBBBYYYY.", U, { top: "GGGGGG..BGGGGG" })],
    [mkBay("23!", "BBBBBB..BBBBBB", ".BBBBGGGGBBBB.", U, { hatch: "half" }), mkBay("21(22)!", "BBBBBB..BBBBBB", ".BBBBBGGBBBBB.", U)],
    [mkBay("19!", "OOOOOO..OOOOOO", ".OOOOYYYYOOOO.", U, { hatch: "half" }), mkBay("17(18)!", "OOOOOOGGGOOOOO", ".OOOOYYYYOOOO.", U)],
    [mkBay("15", "RRRRRRRRRRRRRG", ".RRRRRRRRRRRR.", V9, { hatch: "all" }), mkBay("13(14)", "RRRRRRRRRRRRRG", ".RRRRRRRRRRRR.", V9)],
    [mkBay("11!", ".RRRRGGGGGGGG.", ".RRRRGGGGGYGG.", V8, { upS: UPN, hatch: "half" }), mkBay("9(10)!", ".RRRGG...GGG..", ".RRRRGGGRGGGG.", V8, { upS: UPN, selected: true })],
    [mkBay("7", ".OOOOOOOOOOOO.", ".....OOOO.....", V7, { upS: UPN, hatch: "up" }), mkBay("5(6)", ".OOOOOOOOOOOO.", ".....BBBB.....", V7, { upS: UPN })],
    [mkBay("3", "..YY.OOOOOGGY.", "..............", SM, { upS: UPS, short: true, hatch: "up", start: 4 }), mkBay("1(2)", "..Y.......GY..", "..............", SM.slice(0, 4), { upS: UPS, short: true, start: 3 })],
  ],
  [
    [mkBay("55", "..OO.YYYYO.OO.", ".OOOOOOOOOOO..", S5, { hatch: "all", start: 3 }), mkBay("53(54)!", "..OO.YYYYOOO..", ".OOOYYYYYOOO..", S5, { start: 3 })],
    [mkBay("51", "BBBBBBBBBBBBBB", ".BBBBBBBBBBBB.", S6, { hatch: "all" }), mkBay("49(50)", "BBBBBBBBBBBBBB", ".BBBBBBBBBBBB.", S6)],
    [mkBay("47", "GGGGGGGGGGGGGG", "-GGGG----GGGG-", S6F, { hatch: "all" }), mkBay("45(46)", "GGGGGGGRRGGGGG", "-GGGG----GGGG-", S6F)],
    [mkBay("43!", "YYYYYY.BBYYYYY", ".YYYYBBBBYYYY.", U, { top: "GGGGGG..BGGGGG", hatch: "half" }), mkBay("41(42)!", "YYYYYY.BBYYYYY", ".YYYYBBBBYYYY.", U, { top: "GGGGGG..BBBBBB" })],
    [mkBay("39!", "OOOOOOBBBOOOOO", ".OOOOBBBBOOOO.", U, { hatch: "half", start: 4, lowStart: 2 }), mkBay("37(38)", "OOOOOOBBBOOOOO", ".OOOOBBBBOOOO.", U, { start: 4, lowStart: 2 })],
    [mkBay("35!", "GGGGGGGGGBBBBB", ".GGGGYYYYBBBB.", U, { hatch: "half" }), mkBay("33(34)!", "GGGGGGGGGBBBBB", ".GGGGYYYYBBBB.", U)],
    [mkBay("31!", "BBBBBGGGGGGGGY", ".YYYYGGGGYYYY.", U, { hatch: "half" }), mkBay("29(30)!", "BBBBGGGGGGGGGB", ".YYYYGGGGYYYY.", U)],
  ],
  [
    [mkBay("62", ".BBGGYYBBBBBB.", "", null, { upS: UPN, noBar: true, top: ".BBBBBBBBBBBB." })],
    [mkBay("59", "GGGGGGGBBBBBBB", ".GGGGGGGGBBBB.", S4, { hatch: "all" }), mkBay("57(58)!", "GGGGG.GGGBBBBB", ".GGGGGGGGBBBB.", S4)],
  ],
];

const MiniBay = ({ bay }) => {
  const { up, low, lowShape, top, hatch, start = 2, lowStart = 0, upS = UPF, short, noBar } = bay;
  const rects = [];
  const add = (c, y, tone, hatched, key) => {
    if (tone === "-") return;
    const color = CELL[tone] || "#fff";
    rects.push(<rect key={key} x={c * CW + 0.5} y={y} width={CW} height={CH} fill={color} stroke="#000" strokeWidth=".8" />);
    if (hatched && tone !== ".") {
      rects.push(<rect key={`${key}h`} x={c * CW + 0.5} y={y} width={CW} height={CH} fill="url(#chk)" />);
    }
  };
  upS.forEach((span, r) => {
    if (!span) return;
    for (let c = span[0]; c <= span[1]; c++) {
      const line = r === start && top ? top : up;
      add(c, r * CH + 0.5, r < start ? "." : line[c], !!hatch, `u${r}-${c}`);
    }
  });
  if (lowShape) {
    lowShape.forEach((span, r) => {
      for (let c = span[0]; c <= span[1]; c++) {
        const tone = r < lowStart ? "." : low[c];
        const hatched = hatch === "all" || (hatch === "half" && r < 4);
        add(c, 26 + r * CH, tone === "-" ? "-" : tone, hatched, `l${r}-${c}`);
      }
    });
  }
  const segments = short ? [[24, 29]] : [[0, 29], [30, 20], [51, 29]];
  return (
    <MiniSvg width="81" height="56" viewBox="0 0 81 56" shapeRendering="crispEdges">
      <defs>
        <pattern id="chk" width="2" height="2" patternUnits="userSpaceOnUse">
          <rect width="1" height="1" fill="#000" />
          <rect x="1" y="1" width="1" height="1" fill="#000" />
        </pattern>
      </defs>
      {rects}
      {!noBar && segments.map(([x, w]) => (
        <g key={x}>
          <rect x={x} y="21" width={w} height="3" fill="#000090" />
          <rect x={x} y="21" width="3" height="3" fill="#f00c00" />
          <rect x={x + w - 3} y="21" width="3" height="3" fill="#f00c00" />
        </g>
      ))}
    </MiniSvg>
  );
};

/* ---------- legend ---------- */
const Legend = styled.footer`
  height: 31px;
  flex: none;
  display: flex;
  align-items: flex-start;
  padding: 6px 0 0 2px;
  background: #f0f0f0;
  border-top: 1px solid #c8c8c8;
`;
const LegendIcon = styled.div`
  width: 24px;
  height: 24px;
  flex: none;
  background: #e6e6e6;
  border: 1px solid #d0d0d0;
  display: flex;
  align-items: center;
  justify-content: center;
`;
const LegendButton = styled.div`
  width: 247.8px;
  height: 23px;
  flex: none;
  background: ${(p) => p.$bg};
  border: 1px solid ${(p) => (p.$active ? "#fff" : p.$bg)};
  border-right: 2px solid #808080;
  border-bottom: 2px solid #808080;
  display: flex;
  align-items: center;
  justify-content: center;
  font: ${(p) => (p.$active ? 700 : 400)} 12px Roboto, sans-serif;
  color: #1a1a30;
`;
const LegendIcons = styled.div`
  display: flex;
  flex: none;
  width: 72px;
`;

const letterIcon = (letter) => (
  <svg width="22" height="22" viewBox="0 0 22 22">
    <rect x="9" y="7" width="12" height="4" fill="#f00c00" />
    <rect x="9" y="11" width="12" height="4" fill="#f0d000" />
    <rect x="9" y="15" width="12" height="5" fill="#20b020" />
    <text x="8" y="17" fontSize="20" fontWeight="700" textAnchor="middle" fontFamily="Liberation Serif" fill="#101090">
      {letter}
    </text>
  </svg>
);

const legend = [
  ["AUBNE", "AUBNE"],
  ["SGSIN", "SGSIN (!)"],
  ["THBKK", "THBKK (!)"],
  ["CNSHA", "CNSHA (!)"],
  ["CNHKK", "CNHKK (!)"],
  ["JPYOK", "JPYOK (!)"],
  ["CAVAN", "CAVAN (!)"],
  ["USSEA", "USSEA (!)"],
  ["USLOG", "USLOG"],
];

const menu = ["File", "Cargo", "Tools", "Reports", "HazMat", "Settings", "Window", "Help"];

export default function App() {
  return (
    <Page>
      <GlobalStyle />
      <AppTitle>
        <Logo />
        SimpleStow: C:\ProgramData\AMT Marine\SimpleStow\Demo Plan.pln - AMT Mercator - D012 *
        <AppControls>
          <AppControl><Minus size={12} /></AppControl>
          <AppControl $ml={14}><Copy size={10} /></AppControl>
          <AppControl><X size={13} /></AppControl>
        </AppControls>
      </AppTitle>
      <MenuBar>
        {menu.map((m) => <span key={m}>{m}</span>)}
      </MenuBar>

      <WindowRow $h={648}>
        <WindowShell title="Bay View" w={660} pl={8} pr={5}>
          <BayPlan plan={bay11} />
        </WindowShell>
        <WindowShell title="Bay View" w={630} pl={7} pr={5}>
          <BayPlan plan={bay9} />
        </WindowShell>
        <WindowShell title="Cargo List" w={590} pl={8} pr={7}>
          <Toolbar items={[...cargoTools, "layout:on", ...cargoToolsEnd]} overflow />
          <CargoTable
            h={555}
            cols={colsA}
            rows={rowsA}
            headBold="No."
            hscroll={{ w: 68, ml: 12 }}
          />
        </WindowShell>
        <WindowShell title="Cargo List" w={677} pl={6} pr={8}>
          <Toolbar items={[...cargoTools, "layout", ...cargoToolsEnd, "layers:dim", "|", "hammer"]} />
          <CargoTable
            h={555}
            cols={colsB}
            rows={rowsB}
            scroll={{ w: 18, h: 17, mt: 465 }}
            hscroll={{ w: 91, ml: 7 }}
          />
        </WindowShell>
      </WindowRow>

      <WindowRow $h={323}>
        <WindowShell title="Overall Bay Plan" w={1598} pl={8} pr={5} titleH={29} btnH={16}>
          <Toolbar items={["plan:on", "zoomIn", "zoomOut", "funnel"]} h={26} />
          <PlanBody>
            <CardArea>
              {bayRows.map((cards, r) => (
                <CardRow key={r}>
                  {cards.map((halves, c) => (
                    <Card key={c}>
                      {halves.map((b) => (
                        <Half key={b.name} $selected={b.selected}>
                          <HalfName>{b.name}</HalfName>
                          <MiniBay bay={b} />
                        </Half>
                      ))}
                    </Card>
                  ))}
                </CardRow>
              ))}
            </CardArea>
            <VScroll $w={16}>
              <ChevronUp size={11} strokeWidth={3} color="#606060" />
              <VThumb $h={216} $mt={3} />
              <ChevronDown size={11} strokeWidth={3} color="#606060" />
            </VScroll>
          </PlanBody>
        </WindowShell>
        <WindowShell title="Cargo List" w={959} pl={8} pr={7} titleH={29} btnH={16} active>
          <Toolbar items={[...cargoTools, "layout", ...cargoToolsEnd, "layers:dim", "|", "hammer"]} h={26} />
          <CargoTable
            h={234}
            cols={colsC}
            rows={rowsC}
            headBold="Cell Addr."
            marks={{
              Restow: <svg width="12" height="16" viewBox="0 0 12 16"><path d="M1 1h10L7 7v7L5 13V7z" fill="#fff" stroke="#555" /></svg>,
              FR: <svg width="6" height="6"><rect width="6" height="6" fill="#3a6cc0" /></svg>,
            }}
            bandW={14}
            scroll={{ w: 16, h: 165, mt: 3 }}
          />
        </WindowShell>
      </WindowRow>

      <Legend>
        <LegendIcons>
          <LegendIcon>{letterIcon("L")}</LegendIcon>
          <LegendIcon>{letterIcon("D")}</LegendIcon>
          <LegendIcon>
            <svg width="20" height="20" viewBox="0 0 20 20">
              <path d="M3 1h10l4 4v14H3z" fill="#fff" stroke="#555" />
              <path d="M8 6h7M8 10h7M8 14h7" stroke="#333" />
              <rect x="4.5" y="5" width="2" height="2" fill="#d02020" />
              <rect x="4.5" y="9" width="2" height="2" fill="#2040c0" />
              <rect x="4.5" y="13" width="2" height="2" fill="#20a040" />
            </svg>
          </LegendIcon>
        </LegendIcons>
        {legend.map(([k, text]) => (
          <LegendButton key={k} $bg={PORT[k]} $active={k === "CNHKK"}>{text}</LegendButton>
        ))}
      </Legend>
    </Page>
  );
}
